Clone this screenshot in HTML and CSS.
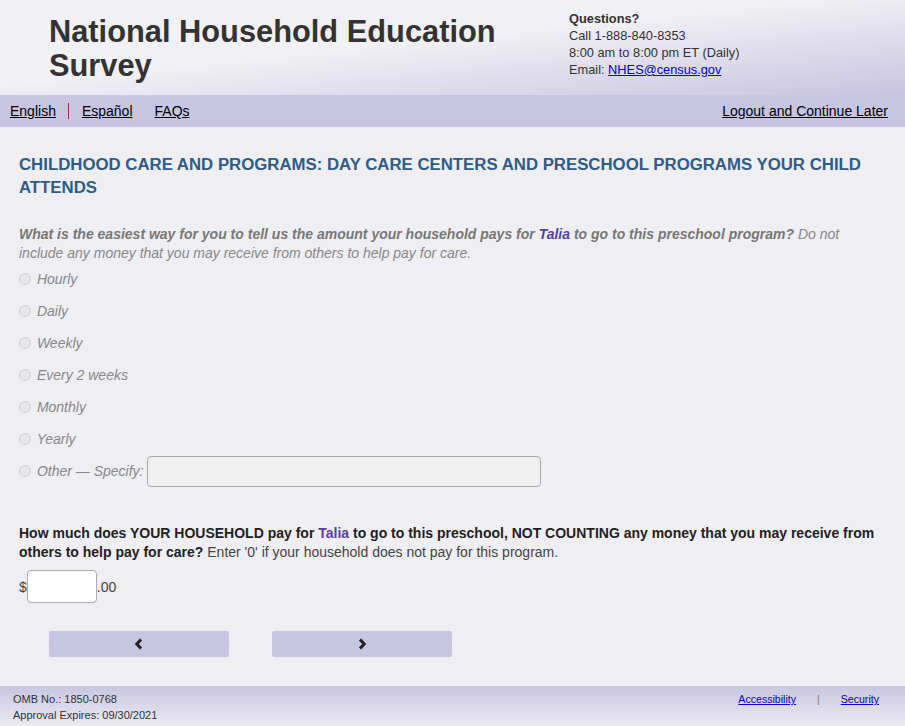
FILE: index.html
```html
<!DOCTYPE html>
<html lang="en">
<head>
    <meta charset="UTF-8">
    <meta name="viewport" content="width=device-width, initial-scale=1.0">
    <title>National Household Education Survey</title>
    <link rel="stylesheet" href="styles.css">
</head>
<body>
    <div class="header">
        <div class="site-title">National Household Education Survey</div>
        <div class="contact">
            <div class="contact-head">Questions?</div>
            <div>Call 1-888-840-8353</div>
            <div>8:00 am to 8:00 pm ET (Daily)</div>
            <div>Email: <a href="#" class="mail">NHES@census.gov</a></div>
        </div>
    </div>

    <div class="navbar">
        <div class="nav-left">
            <a href="#">English</a>
            <span class="nav-divider"></span>
            <a href="#">Español</a>
            <a href="#" class="faq">FAQs</a>
        </div>
        <a href="#">Logout and Continue Later</a>
    </div>

    <div class="main">
        <h1 class="section-title">CHILDHOOD CARE AND PROGRAMS: DAY CARE CENTERS AND PRESCHOOL PROGRAMS YOUR CHILD ATTENDS</h1>

        <p class="question q-muted"><b>What is the easiest way for you to tell us the amount your household pays for <span class="child">Talia</span> to go to this preschool program?</b> Do not include any money that you may receive from others to help pay for care.</p>

        <div class="options">
            <label class="option"><input type="radio" name="unit"> Hourly</label>
            <label class="option"><input type="radio" name="unit"> Daily</label>
            <label class="option"><input type="radio" name="unit"> Weekly</label>
            <label class="option"><input type="radio" name="unit"> Every 2 weeks</label>
            <label class="option"><input type="radio" name="unit"> Monthly</label>
            <label class="option"><input type="radio" name="unit"> Yearly</label>
            <label class="option"><input type="radio" name="unit"> Other — Specify: <input type="text" class="specify"></label>
        </div>

        <p class="question q-main"><b>How much does YOUR HOUSEHOLD pay for <span class="child">Talia</span> to go to this preschool, NOT COUNTING any money that you may receive from others to help pay for care?</b> Enter '0' if your household does not pay for this program.</p>

        <div class="amount">
            <span>$</span><input type="text" class="money"><span>.00</span>
        </div>

        <div class="buttons">
            <button class="nav-btn" aria-label="Previous">
                <svg width="10" height="12" viewBox="0 0 10 12"><polyline points="7,1.5 2.8,6 7,10.5" fill="none" stroke="#222" stroke-width="3"/></svg>
            </button>
            <button class="nav-btn" aria-label="Next">
                <svg width="10" height="12" viewBox="0 0 10 12"><polyline points="3,1.5 7.2,6 3,10.5" fill="none" stroke="#222" stroke-width="3"/></svg>
            </button>
        </div>
    </div>

    <div class="footer">
        <div class="omb">
            <div>OMB No.: 1850-0768</div>
            <div>Approval Expires: 09/30/2021</div>
        </div>
        <div class="footer-links">
            <a href="#">Accessibility</a>
            <span class="pipe">|</span>
            <a href="#">Security</a>
        </div>
    </div>
</body>
</html>
```

FILE: styles.css
```css
body {
    margin: 0;
    font-family: 'Liberation Sans', Arial, sans-serif;
    background-color: #efeef3;
    color: #333;
}
.header {
    display: flex;
    justify-content: space-between;
    height: 95px;
    box-sizing: border-box;
    background: linear-gradient(to bottom right, #f1f0f4 45%, #c8c4e0);
}
.site-title {
    width: 470px;
    padding: 15px 0 0 49px;
    font-size: 30.8px;
    line-height: 34px;
    font-weight: bold;
    color: #333;
}
.contact {
    width: 336px;
    padding-top: 10px;
    font-size: 12.8px;
    line-height: 17px;
    color: #333;
}
.contact-head {
    font-weight: bold;
}
.mail {
    color: #0000cc;
}
.navbar {
    display: flex;
    justify-content: space-between;
    align-items: center;
    height: 32px;
    padding: 0 17px 0 10px;
    background-color: #c8c5e2;
    font-size: 14px;
}
.navbar a {
    color: #000;
}
.nav-left {
    display: flex;
    align-items: center;
}
.nav-divider {
    width: 1px;
    height: 16px;
    margin: 0 13px 0 12px;
    background-color: #8b3a3a;
}
.faq {
    margin-left: 22px;
}
.main {
    padding: 26px 19px 0 19px;
}
.section-title {
    margin: 0;
    font-size: 16.8px;
    line-height: 23px;
    color: #2e5c8a;
}
.question {
    margin: 0;
    font-size: 14px;
    line-height: 19px;
}
.q-muted {
    margin-top: 26px;
    color: #888;
    font-style: italic;
}
.q-muted b {
    color: #777;
}
.child {
    color: #5b3ea8;
}
.options {
    display: flex;
    flex-direction: column;
}
.option {
    display: flex;
    align-items: center;
    height: 32px;
    font-size: 14px;
    font-style: italic;
    color: #888;
    white-space: pre;
}
.option input[type="radio"] {
    appearance: none;
    width: 12px;
    height: 12px;
    margin: 0 2px 0 0;
    border: 1px solid #cfcfcf;
    border-radius: 50%;
    background-color: #e6e6e9;
}
.specify {
    width: 394px;
    height: 31px;
    box-sizing: border-box;
    margin-left: 0;
    border: 1px solid #aaa;
    border-radius: 4px;
    background-color: #efefef;
}
.q-main {
    margin-top: 37px;
    color: #444;
}
.q-main b {
    color: #222;
}
.amount {
    display: flex;
    align-items: center;
    margin-top: 8px;
    font-size: 14px;
    color: #444;
}
.money {
    width: 70px;
    height: 33px;
    box-sizing: border-box;
    margin: 0;
    border: 1px solid #aaa;
    border-radius: 4px;
    background-color: #fff;
}
.buttons {
    display: flex;
    gap: 43px;
    margin: 28px 0 0 30px;
}
.nav-btn {
    display: flex;
    align-items: center;
    justify-content: center;
    width: 180px;
    height: 26px;
    padding: 0;
    border: none;
    border-radius: 2px;
    background-color: #c8c5e2;
}
.footer {
    display: flex;
    justify-content: space-between;
    margin-top: 29px;
    height: 40px;
    box-sizing: border-box;
    padding: 5px 26px 0 13px;
    background: linear-gradient(to bottom, #c9c6e2, #ebeaf2);
    font-size: 11px;
    line-height: 16px;
    color: #333;
}
.footer-links {
    font-size: 10.6px;
}
.footer-links a {
    color: #0000cc;
}
.pipe {
    margin: 0 18px;
    color: #777;
}
```
